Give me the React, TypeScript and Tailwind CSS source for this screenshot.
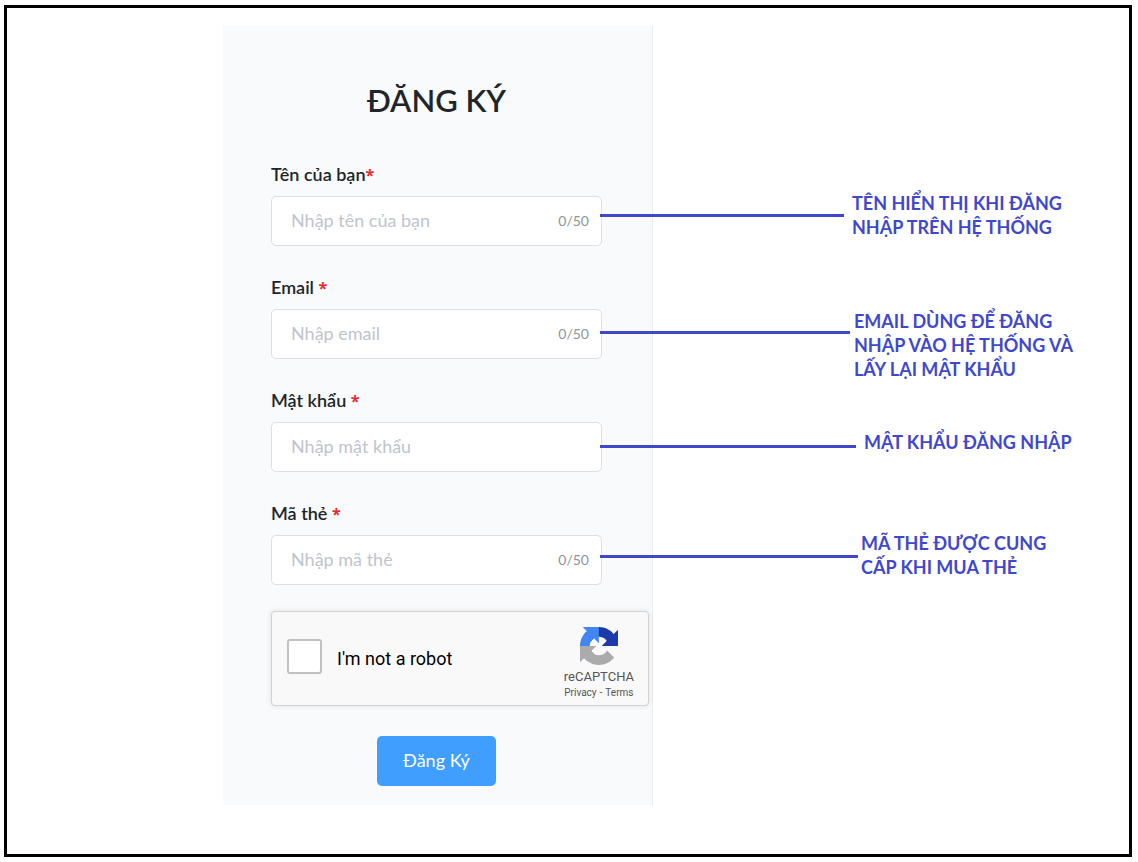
import { useState } from "react";

type Field = {
  id: string;
  label: string;
  gap: boolean;
  placeholder: string;
  type: string;
  limit?: number;
  callout: { lines: string[]; position: string; line: string };
};

const fields: Field[] = [
  {
    id: "name",
    label: "Tên của bạn",
    gap: false,
    placeholder: "Nhập tên của bạn",
    type: "text",
    limit: 50,
    callout: {
      lines: ["TÊN HIỂN THỊ KHI ĐĂNG", "NHẬP TRÊN HỆ THỐNG"],
      position: "-top-[6px] gap-2",
      line: "mt-[23px] w-[244px]",
    },
  },
  {
    id: "email",
    label: "Email",
    gap: true,
    placeholder: "Nhập email",
    type: "email",
    limit: 50,
    callout: {
      lines: ["EMAIL DÙNG ĐỂ ĐĂNG", "NHẬP VÀO HỆ THỐNG VÀ", "LẤY LẠI MẬT KHẨU"],
      position: "-top-px gap-1",
      line: "mt-[22px] w-[250px]",
    },
  },
  {
    id: "password",
    label: "Mật khẩu",
    gap: true,
    placeholder: "Nhập mật khẩu",
    type: "password",
    callout: {
      lines: ["MẬT KHẨU ĐĂNG NHẬP"],
      position: "top-[7px] gap-2",
      line: "mt-[15px] w-[256px]",
    },
  },
  {
    id: "card",
    label: "Mã thẻ",
    gap: true,
    placeholder: "Nhập mã thẻ",
    type: "text",
    limit: 50,
    callout: {
      lines: ["MÃ THẺ ĐƯỢC CUNG", "CẤP KHI MUA THẺ"],
      position: "-top-[5px] gap-[3px]",
      line: "mt-6 w-[258px]",
    },
  },
];

function FormField({ field }: { field: Field }) {
  const [value, setValue] = useState("");
  return (
    <div>
      <label
        htmlFor={field.id}
        className="mb-[10px] block text-[18px] leading-6 font-semibold text-[#212529]"
      >
        {field.label}
        {field.gap ? " " : ""}
        <span className="font-['Open_Sans',sans-serif] text-[16px] leading-none font-bold text-[#e8282b]">
          *
        </span>
      </label>
      <div className="relative flex h-[50px] items-center rounded-[5px] border border-[#dcdfe6] bg-white pr-3 pl-[19px]">
        <input
          id={field.id}
          type={field.type}
          maxLength={field.limit}
          placeholder={field.placeholder}
          value={value}
          onChange={(e) => setValue(e.target.value)}
          className="min-w-0 flex-1 bg-transparent pb-[2px] text-[18px] leading-6 text-[#606266] outline-none placeholder:text-[#c0c4cc]"
        />
        {field.limit && (
          <span className="text-[14px] leading-6 text-[#909399]">
            {value.length}/{field.limit}
          </span>
        )}
        <div
          className={`absolute left-full -ml-px flex items-start ${field.callout.position}`}
        >
          <span className={`h-[3px] shrink-0 bg-[#3f48cc] ${field.callout.line}`} />
          <p className="text-[18px] leading-6 font-bold whitespace-nowrap text-[#3f48cc]">
            {field.callout.lines.map((line) => (
              <span key={line} className="block">
                {line}
              </span>
            ))}
          </p>
        </div>
      </div>
    </div>
  );
}

function CaptchaLogo() {
  return (
    <svg viewBox="0 0 64 64" className="h-[38px] w-[38px]" aria-hidden="true">
      <path
        fill="#1c3aa9"
        d="M64 31.955a33 33 0 0 0-.032-1.364V4.687l-7.161 7.161C50.946 4.674 42.033.093 32.05.093c-10.389 0-19.618 4.96-25.458 12.64l11.738 11.861a15.55 15.55 0 0 1 4.754-5.334c2.05-1.6 4.955-2.908 8.962-2.908.484 0 .858.057 1.133.163 4.965.392 9.268 3.132 11.802 7.109l-8.309 8.309c10.524-.041 22.413-.066 27.328.022"
      />
      <path
        fill="#4285f4"
        d="M31.862.094a33 33 0 0 0-1.364.032H4.594l7.161 7.161C4.581 13.148 0 22.061 0 32.045c0 10.389 4.96 19.618 12.64 25.458L24.501 45.765a15.55 15.55 0 0 1-5.334-4.754c-1.6-2.05-2.908-4.955-2.908-8.962 0-.484.057-.858.163-1.133.392-4.965 3.132-9.268 7.109-11.802l8.309 8.309c-.041-10.524-.066-22.413.022-27.329"
      />
      <path
        fill="#ababab"
        d="M.001 32.045q.001.685.032 1.364v25.904l7.161-7.161c5.861 7.174 14.774 11.755 24.758 11.755 10.389 0 19.618-4.96 25.458-12.64L45.672 39.406a15.55 15.55 0 0 1-4.754 5.334c-2.05 1.6-4.955 2.908-8.962 2.908-.484 0-.858-.057-1.133-.163-4.965-.392-9.268-3.132-11.802-7.109l8.309-8.309c-10.524.041-22.413.066-27.329-.022"
      />
    </svg>
  );
}

function Captcha() {
  return (
    <div className="mt-[26px] flex h-[95px] w-[378px] items-center rounded-[4px] border border-[#d3d3d3] bg-[#f9f9f9] pr-[14px] pl-[15px] font-[Roboto,sans-serif] shadow-[0_0_4px_1px_rgba(0,0,0,0.08)]">
      <input
        id="robot"
        type="checkbox"
        className="mb-1 h-[35px] w-[35px] appearance-none rounded-[3px] border-2 border-[#c1c1c1] bg-white checked:bg-[#409eff]"
      />
      <label htmlFor="robot" className="ml-[15px] flex-1 text-[18px] leading-6 text-black">
        I'm not a robot
      </label>
      <div className="flex flex-col items-center pt-[11px] text-[#555]">
        <CaptchaLogo />
        <span className="mt-1 text-[13px] leading-4">reCAPTCHA</span>
        <span className="text-[10px] leading-4">
          <a href="#privacy">Privacy</a>
          <span className="px-[3px]">-</span>
          <a href="#terms">Terms</a>
        </span>
      </div>
    </div>
  );
}

export default function App() {
  return (
    <div className="flex min-h-screen bg-white pt-[5px] pr-[6px] pb-[5px] pl-1 font-[Lato,'Open_Sans',sans-serif]">
      <main className="flex-1 border-[3px] border-black pt-[18px] pb-6 pl-[216px]">
        <form
          onSubmit={(e) => e.preventDefault()}
          className="w-full max-w-[430px] border-r border-[#e9ecef] bg-[#f8fafc] pt-[54px] pr-[50px] pb-[19px] pl-12"
        >
          <h1 className="mb-[42px] text-center text-[31px] leading-10 font-semibold text-[#212529]">
            ĐĂNG KÝ
          </h1>
          <div className="flex flex-col gap-[29px]">
            {fields.map((field) => (
              <FormField key={field.id} field={field} />
            ))}
          </div>
          <Captcha />
          <div className="mt-[30px] flex justify-center">
            <button
              type="submit"
              className="h-[50px] rounded-[5px] bg-[#409eff] px-[26px] pb-[2px] text-[18px] leading-6 text-white"
            >
              Đăng Ký
            </button>
          </div>
        </form>
      </main>
    </div>
  );
}
